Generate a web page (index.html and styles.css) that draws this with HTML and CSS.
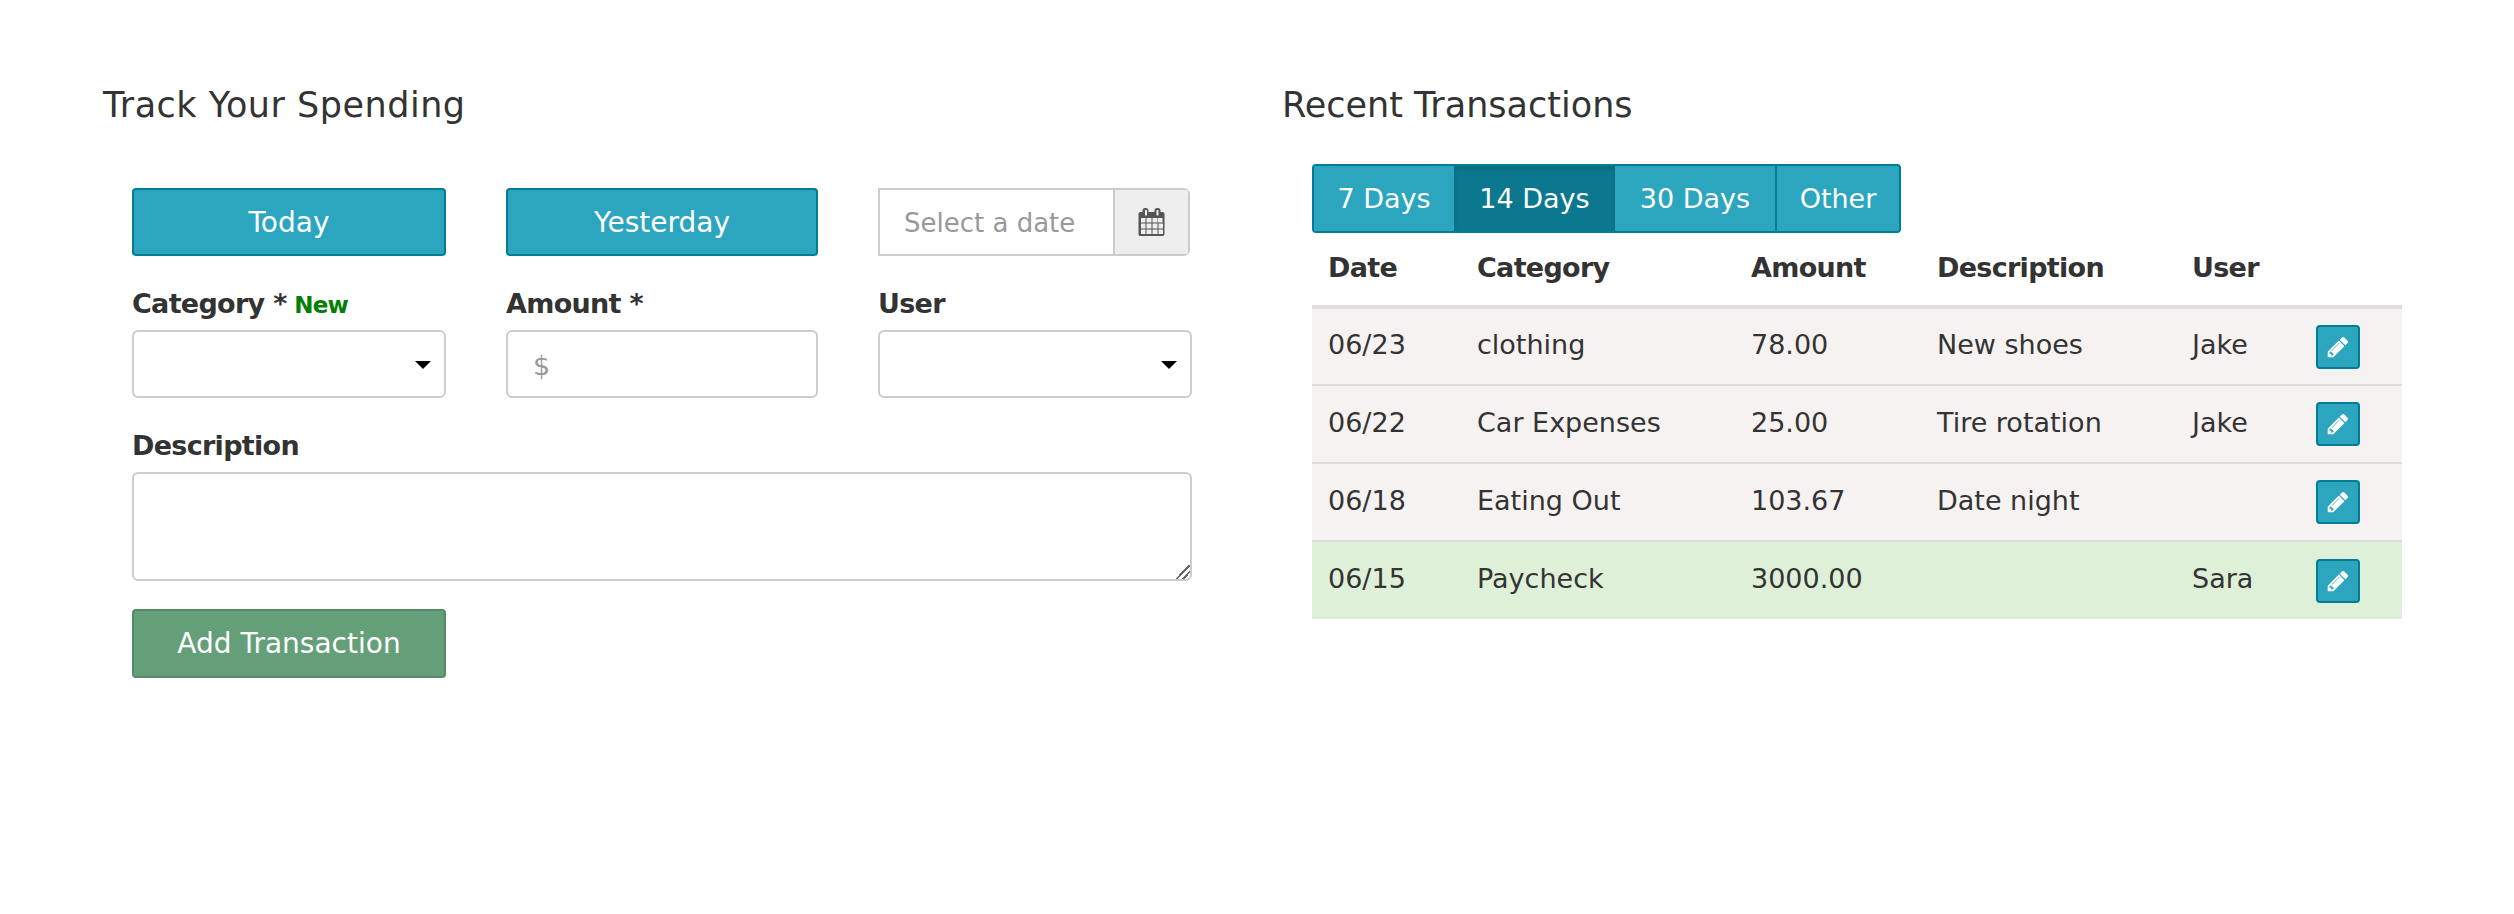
FILE: index.html
```html
<!DOCTYPE html>
<html lang="en">
<head>
    <meta charset="UTF-8">
    <title>Track Your Spending</title>
    <link rel="stylesheet" href="styles.css">
</head>
<body>
    <div class="page">
        <section class="left">
            <h2 class="form-title">Track Your Spending</h2>
            <form class="form">
                <div class="date-row">
                    <button type="button" class="btn">Today</button>
                    <button type="button" class="btn">Yesterday</button>
                    <div class="date-group">
                        <input type="text" class="date-input" placeholder="Select a date">
                        <span class="date-addon">
                            <svg class="cal-icon" viewBox="0 0 1792 1792"><path d="M192 1664h288v-288h-288v288zm352 0h320v-288h-320v288zm-352-352h288v-320h-288v320zm352 0h320v-320h-320v320zm-352-384h288v-288h-288v288zm736 736h320v-288h-320v288zm-384-736h320v-288h-320v288zm768 736h288v-288h-288v288zm-384-352h320v-320h-320v320zm-352-864v-288q0-13-9.5-22.5t-22.5-9.5h-64q-13 0-22.5 9.5t-9.5 22.5v288q0 13 9.5 22.5t22.5 9.5h64q13 0 22.5-9.5t9.5-22.5zm736 864h288v-320h-288v320zm-384-384h320v-288h-320v288zm352 0h288v-288h-288v288zm32-480v-288q0-13-9.5-22.5t-22.5-9.5h-64q-13 0-22.5 9.5t-9.5 22.5v288q0 13 9.5 22.5t22.5 9.5h64q13 0 22.5-9.5t9.5-22.5zm384-64v1280q0 52-38 90t-90 38h-1408q-52 0-90-38t-38-90v-1280q0-52 38-90t90-38h128v-96q0-66 47-113t113-47h64q66 0 113 47t47 113v96h384v-96q0-66 47-113t113-47h64q66 0 113 47t47 113v96h128q52 0 90 38t38 90z"/></svg>
                        </span>
                    </div>
                </div>
                <div class="field-row">
                    <div class="field">
                        <label>Category * <a href="#" class="new-link">New</a></label>
                        <div class="select-wrap"><select></select></div>
                    </div>
                    <div class="field">
                        <label>Amount *</label>
                        <input type="text" class="input" placeholder="$">
                    </div>
                    <div class="field">
                        <label>User</label>
                        <div class="select-wrap"><select></select></div>
                    </div>
                </div>
                <div class="field">
                    <label>Description</label>
                    <textarea></textarea>
                </div>
                <div class="submit-row">
                    <button type="button" class="btn btn-add">Add Transaction</button>
                </div>
            </form>
        </section>

        <section class="right">
            <h2>Recent Transactions</h2>
            <div class="panel">
                <div class="btn-group">
                    <button type="button" class="tab tab-7">7 Days</button>
                    <button type="button" class="tab tab-14 active">14 Days</button>
                    <button type="button" class="tab tab-30">30 Days</button>
                    <button type="button" class="tab tab-other">Other</button>
                </div>
                <table>
                    <colgroup>
                        <col class="c-date"><col class="c-cat"><col class="c-amt"><col class="c-desc"><col class="c-user"><col class="c-edit">
                    </colgroup>
                    <thead>
                        <tr><th>Date</th><th>Category</th><th>Amount</th><th>Description</th><th>User</th><th></th></tr>
                    </thead>
                    <tbody>
                        <tr class="expense">
                            <td>06/23</td><td>clothing</td><td>78.00</td><td>New shoes</td><td>Jake</td>
                            <td class="edit-cell"><button type="button" class="edit"><svg class="pencil" viewBox="0 0 1792 1792"><use href="#pencil-path"/></svg></button></td>
                        </tr>
                        <tr class="expense">
                            <td>06/22</td><td>Car Expenses</td><td>25.00</td><td>Tire rotation</td><td>Jake</td>
                            <td class="edit-cell"><button type="button" class="edit"><svg class="pencil" viewBox="0 0 1792 1792"><use href="#pencil-path"/></svg></button></td>
                        </tr>
                        <tr class="expense">
                            <td>06/18</td><td>Eating Out</td><td>103.67</td><td>Date night</td><td></td>
                            <td class="edit-cell"><button type="button" class="edit"><svg class="pencil" viewBox="0 0 1792 1792"><use href="#pencil-path"/></svg></button></td>
                        </tr>
                        <tr class="income">
                            <td>06/15</td><td>Paycheck</td><td>3000.00</td><td></td><td>Sara</td>
                            <td class="edit-cell"><button type="button" class="edit"><svg class="pencil" viewBox="0 0 1792 1792"><use href="#pencil-path"/></svg></button></td>
                        </tr>
                    </tbody>
                </table>
            </div>
        </section>
    </div>

    <svg class="defs" width="0" height="0">
        <defs>
            <path id="pencil-path" d="M491 1536l91-91-235-235-91 91v107h128v128h107zm523-928q0-22-22-22-10 0-17 7l-542 542q-7 7-7 17 0 22 22 22 10 0 17-7l542-542q7-7 7-17zm-54-192l416 416-832 832h-416v-416zm683 96q0 53-37 90l-166 166-416-416 166-165q36-38 90-38 53 0 91 38l235 234q37 39 37 91z"/>
        </defs>
    </svg>
</body>
</html>
```

FILE: styles.css
```css
* {
    box-sizing: border-box;
}

body {
    margin: 0;
    background: #fff;
    color: #333;
    font-family: "DejaVu Sans", sans-serif;
    font-size: 27px;
}

.page {
    display: flex;
    padding: 80px 0 0 103px;
}

.left {
    width: 1179px;
}

.right {
    width: 1120px;
}

h2 {
    margin: 0;
    font-size: 35px;
    font-weight: 400;
    line-height: 50px;
}

.form-title {
    letter-spacing: 0.5px;
}

/* form side */
.form {
    width: 1060px;
    margin-left: 29px;
    padding-top: 58px;
}

.date-row,
.field-row {
    display: grid;
    grid-template-columns: 314px 312px 314px;
    column-gap: 60px;
}

.btn {
    height: 68px;
    padding: 0;
    border: 2px solid #007e94;
    border-radius: 4px;
    background: #2ca6bf;
    color: #fff;
    font: inherit;
    font-size: 28px;
}

.date-group {
    display: flex;
    width: 312px;
    height: 68px;
    border: 2px solid #ccc;
    border-radius: 0 6px 6px 0;
}

.date-input {
    flex: 1;
    min-width: 0;
    padding: 2px 24px 0;
    border: 0;
    outline: 0;
    color: #333;
    font: inherit;
    font-size: 26px;
}

.date-input::placeholder,
.input::placeholder {
    color: #999;
    opacity: 1;
}

.date-addon {
    display: flex;
    align-items: center;
    justify-content: center;
    width: 75px;
    border-left: 2px solid #ccc;
    background: #eee;
}

.cal-icon {
    width: 28px;
    height: 28px;
    fill: #555;
}

.field-row {
    margin-top: 27px;
}

label {
    display: block;
    height: 47px;
    font-weight: 700;
    line-height: 41px;
    letter-spacing: -0.7px;
}

.new-link {
    margin-left: -1px;
    color: #008000;
    font-size: 23px;
    letter-spacing: -0.8px;
    text-decoration: none;
}

.input,
select,
textarea {
    display: block;
    width: 100%;
    border: 2px solid #ccc;
    border-radius: 6px;
    outline: 0;
    background: #fff;
    color: #333;
    font: inherit;
}

.input,
select {
    height: 68px;
    padding: 2px 25px 0;
}

select {
    appearance: none;
}

.select-wrap {
    position: relative;
}

.select-wrap::after {
    content: "";
    position: absolute;
    top: 31px;
    right: 15px;
    border-top: 8px solid #000;
    border-left: 8px solid transparent;
    border-right: 8px solid transparent;
}

.form > .field {
    margin-top: 27px;
}

textarea {
    height: 109px;
    padding: 12px 24px;
}

textarea::-webkit-resizer {
    background: linear-gradient(135deg, transparent 50%, #666 50%, #666 58%, transparent 58%, transparent 72%, #666 72%, #666 80%, transparent 80%);
}

.submit-row {
    margin-top: 28px;
}

.btn-add {
    width: 314px;
    height: 69px;
    border-color: #558a68;
    background: #659f79;
}

/* transactions side */
.panel {
    width: 1090px;
    margin-left: 30px;
    padding-top: 34px;
}

.btn-group {
    display: flex;
    width: 589px;
    height: 69px;
    border: 2px solid #007e94;
    border-radius: 4px;
    background: #2ca6bf;
    overflow: hidden;
}

.tab {
    padding: 0;
    border: 0;
    background: #2ca6bf;
    color: #fff;
    font: inherit;
}

.tab-7 {
    width: 140px;
}

.tab-14 {
    width: 161px;
}

.tab-30 {
    width: 160px;
}

.tab-other {
    width: 124px;
    border-left: 2px solid #007e94;
}

.tab.active {
    background: #0b788f;
    box-shadow: inset 0 3px 5px rgba(0, 0, 0, 0.125);
}

table {
    width: 1090px;
    border-collapse: collapse;
    table-layout: fixed;
}

.c-date { width: 149px; }
.c-cat { width: 274px; }
.c-amt { width: 186px; }
.c-desc { width: 255px; }
.c-user { width: 124px; }
.c-edit { width: 102px; }

th,
td {
    padding: 0 16px 4px;
    text-align: left;
}

th {
    height: 74px;
    border-bottom: 4px solid #ddd;
    letter-spacing: -0.7px;
}

td {
    height: 78px;
    border-bottom: 2px solid #ddd;
}

td.edit-cell {
    padding-bottom: 0;
}

.expense {
    background: #f7f2f2;
}

.income {
    background: #dff0d8;
}

.income td {
    border-bottom: 0;
}

.edit {
    display: flex;
    align-items: center;
    justify-content: center;
    width: 44px;
    height: 44px;
    padding: 0;
    border: 2px solid #007e94;
    border-radius: 4px;
    background: #2ca6bf;
}

.pencil {
    width: 24px;
    height: 24px;
    fill: #fff;
}

.defs {
    position: absolute;
}
```
